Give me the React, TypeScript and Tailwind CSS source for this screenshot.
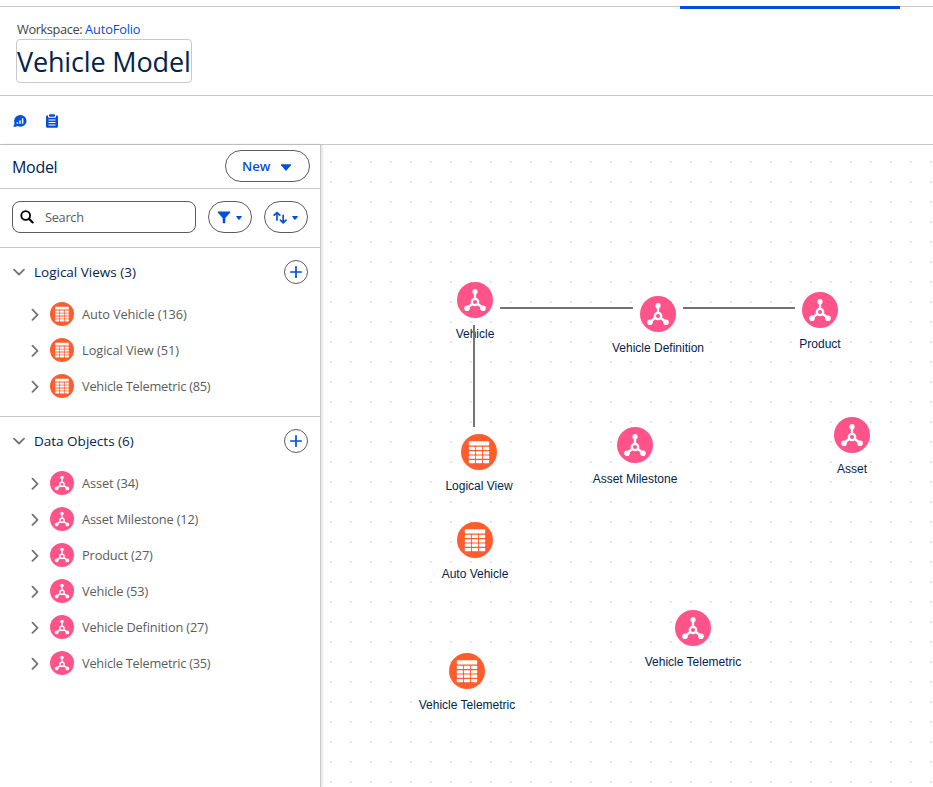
import React from "react";

type Kind = "view" | "object";

function EntityIcon({ kind, className }: { kind: Kind; className: string }) {
  if (kind === "view") {
    return (
      <svg viewBox="0 0 36 36" className={className}>
        <circle cx="18" cy="18" r="18" fill="#ff5d2d" />
        <g fill="#fff">
          <rect x="7.8" y="7.2" width="20.4" height="4.2" rx="0.9" />
          {[12.8, 17.2, 21.6, 26].map((y) =>
            [7.8, 14.9, 22].map((x) => <rect key={`${x}-${y}`} x={x} y={y} width="6.2" height="3.2" rx="0.6" />)
          )}
        </g>
      </svg>
    );
  }
  return (
    <svg viewBox="0 0 36 36" className={className}>
      <circle cx="18" cy="18" r="18" fill="#ff538a" />
      <g stroke="#fff" strokeWidth="2.3" fill="none">
        <circle cx="18" cy="20" r="3.2" />
        <path d="M18 17V9.6M15.2 22L10 26M20.8 22L26 26" />
      </g>
      <g fill="#fff">
        <circle cx="18" cy="9.7" r="2.6" />
        <circle cx="10" cy="26.2" r="2.8" />
        <circle cx="26" cy="26.2" r="2.8" />
      </g>
    </svg>
  );
}

interface Item {
  kind: Kind;
  label: string;
  tracking: string;
}

const views: Item[] = [
  { kind: "view", label: "Auto Vehicle (136)", tracking: "tracking-[-0.12px]" },
  { kind: "view", label: "Logical View (51)", tracking: "tracking-[-0.05px]" },
  { kind: "view", label: "Vehicle Telemetric (85)", tracking: "tracking-[-0.25px]" },
];

const objects: Item[] = [
  { kind: "object", label: "Asset (34)", tracking: "tracking-[-0.1px]" },
  { kind: "object", label: "Asset Milestone (12)", tracking: "tracking-[-0.16px]" },
  { kind: "object", label: "Product (27)", tracking: "tracking-[-0.15px]" },
  { kind: "object", label: "Vehicle (53)", tracking: "tracking-[-0.16px]" },
  { kind: "object", label: "Vehicle Definition (27)", tracking: "tracking-[-0.17px]" },
  { kind: "object", label: "Vehicle Telemetric (35)", tracking: "tracking-[-0.25px]" },
];

function Section({ title, items }: { title: string; items: Item[] }) {
  return (
    <section className="pb-3">
      <div className="flex h-12 items-center pr-3 pl-3">
        <svg viewBox="0 0 14 14" className="h-3.5 w-3.5 shrink-0" fill="none" stroke="#747474" strokeWidth="1.8" strokeLinecap="round" strokeLinejoin="round">
          <path d="M2 4.7L7 9.5L12 4.7" />
        </svg>
        <h3 className="ml-2 flex-1 text-[13.5px] leading-5 text-[#03234d]">{title}</h3>
        <button className="flex h-6 w-6 items-center justify-center rounded-full border border-[#5c5c5c]">
          <svg viewBox="0 0 14 14" className="h-3.5 w-3.5 shrink-0" stroke="#0250d9" strokeWidth="1.7" strokeLinecap="round">
            <path d="M7 1.8V12.2M1.8 7H12.2" />
          </svg>
        </button>
      </div>
      {items.map((item) => (
        <div key={item.label} className="flex h-9 items-center pl-7">
          <svg viewBox="0 0 14 14" className="h-3.5 w-3.5 shrink-0" fill="none" stroke="#747474" strokeWidth="1.8" strokeLinecap="round" strokeLinejoin="round">
            <path d="M4.5 2.7L9.5 7.8L4.5 12.9" />
          </svg>
          <EntityIcon kind={item.kind} className="ml-2 h-6 w-6 shrink-0" />
          <span className={`ml-2 text-[12.8px] leading-5 text-[#5c5c5c] ${item.tracking}`}>{item.label}</span>
        </div>
      ))}
    </section>
  );
}

function Node({ kind, label, place }: { kind: Kind; label: string; place: string }) {
  return (
    <div className={`absolute flex w-36 -translate-x-1/2 flex-col items-center ${place}`}>
      <EntityIcon kind={kind} className="h-9 w-9" />
      <span className="mt-2 font-['Liberation_Sans',Arial,sans-serif] text-xs leading-4 whitespace-nowrap text-[#03234d]">{label}</span>
    </div>
  );
}

function Caret() {
  return (
    <svg viewBox="0 0 6 4" className="mt-px h-1 w-1.5" fill="#0250d9">
      <path d="M.5 0H5.5Q6 .1 5.7.7L3.4 3.7Q3 4 2.6 3.7L.3.7Q0 .1.5 0Z" />
    </svg>
  );
}

export default function App() {
  return (
    <div className="flex h-[787px] w-[933px] flex-col overflow-hidden bg-white font-['Open_Sans','Noto_Sans',sans-serif]">
      <div className="relative h-[7px] shrink-0 border-b border-[#c9c9c9]">
        <div className="absolute top-1.5 left-[680px] h-[3px] w-[220px] bg-[#0250d9]" />
      </div>
      <header className="flex h-[89px] shrink-0 flex-col items-start border-b border-[#c9c9c9] pt-3 pl-4">
        <div className="pl-px text-[12.8px] leading-5 tracking-[-0.4px] text-[#444]">
          Workspace: <a className="tracking-[-0.15px] text-[#0250d9]">AutoFolio</a>
        </div>
        <h1 className="flex h-11 w-44 items-center rounded border border-[#c9c9c9] pt-0.5 text-[27px] leading-[42px] tracking-[-0.15px] whitespace-nowrap text-[#03234d]">
          Vehicle Model
        </h1>
      </header>
      <div className="flex h-[49px] shrink-0 items-center gap-[18px] border-b border-[#c9c9c9] pt-0.5 pl-[13px]">
        <svg viewBox="0 0 14 14" className="h-3.5 w-3.5">
          <ellipse cx="7.3" cy="6.9" rx="6.2" ry="5.9" fill="#0250d9" />
          <path fill="#0250d9" d="M1.5 8.5Q1.6 10.8.3 12Q0 12.7.8 12.8Q3 12.9 4.5 11.9Z" />
          <path d="M4.4 8.3V9.8M7 6.6V9.8M9.6 4.2V9.8" stroke="#fff" strokeWidth="1.5" />
        </svg>
        <svg viewBox="0 0 14 14" className="h-3.5 w-3.5">
          <path fill="#0250d9" d="M2.2 1.5H3v1.3q0 .9.9.9h6.2q.9 0 .9-.9V1.5h.8q1.2 0 1.2 1.2v9.8q0 1.2-1.2 1.2H2.2Q1 13.7 1 12.5V2.7Q1 1.5 2.2 1.5Z" />
          <rect x="4" y=".3" width="6" height="2.5" rx=".8" fill="#0250d9" />
          <path d="M3.5 6H10.5M3.5 8.5H10.5M3.5 11H10.5" stroke="#fff" strokeWidth="1.1" />
        </svg>
      </div>
      <div className="flex min-h-0 flex-1">
        <aside className="z-10 flex w-[321px] shrink-0 flex-col border-r border-[#c9c9c9] bg-white shadow-[1px_0_3px_rgba(0,0,0,0.16)]">
          <div className="flex h-11 shrink-0 items-center justify-between border-b border-[#c9c9c9] pr-2.5 pb-px pl-3">
            <h2 className="pt-0.5 text-base tracking-[-0.3px] text-[#03234d]">Model</h2>
            <button className="flex h-8 w-[85px] items-center rounded-full border border-[#5c5c5c] pl-4 text-[13px] font-semibold text-[#0250d9]">
              <span className="pt-px">New</span>
              <svg viewBox="0 0 12 7" className="mt-[3px] ml-2.5 h-[7px] w-3" fill="#0250d9">
                <path d="M1.5.3H10.5Q11.5.3 10.9 1.2L6.7 6.3Q6 7 5.3 6.3L1.1 1.2Q.5.3 1.5.3Z" />
              </svg>
            </button>
          </div>
          <div className="flex h-[59px] shrink-0 items-center gap-3 border-b border-[#c9c9c9] pr-3 pb-0.5 pl-3">
            <div className="flex h-8 w-46 items-center rounded-lg border border-[#5c5c5c] pl-[7px]">
              <svg viewBox="0 0 14 14" className="h-3.5 w-3.5" fill="none" stroke="#000" strokeWidth="1.8">
                <circle cx="5.7" cy="5.5" r="4.4" />
                <path d="M8.9 8.7L12.7 12.5" strokeWidth="2.1" strokeLinecap="round" />
              </svg>
              <span className="mt-0.5 ml-[11px] text-[12.8px] tracking-[-0.3px] text-[#5c5c5c]">Search</span>
            </div>
            <button className="flex h-8 w-11 items-center justify-center gap-[5px] rounded-full border border-[#5c5c5c] pr-0.5">
              <svg viewBox="0 0 14 14" className="h-3.5 w-3.5" fill="#0250d9">
                <path d="M1 1.5H13Q13.8 1.8 13.2 2.6L8.3 8V12.8Q8.3 13.3 7.8 13.3H6.2Q5.7 13.3 5.7 12.8V8L.8 2.6Q.2 1.8 1 1.5Z" />
              </svg>
              <Caret />
            </button>
            <button className="flex h-8 w-11 items-center justify-center gap-[5px] rounded-full border border-[#5c5c5c] pr-0.5">
              <svg viewBox="0 0 14 14" className="h-3.5 w-3.5" fill="none" stroke="#0250d9" strokeWidth="1.7" strokeLinecap="round" strokeLinejoin="round">
                <path d="M4 10V2.8M1.2 5.2L4 2.5L6.8 5.2M10.2 5.3V12.5M7.4 10.1L10.2 12.8L13 10.1" />
              </svg>
              <Caret />
            </button>
          </div>
          <div className="border-b border-[#c9c9c9]">
            <Section title="Logical Views (3)" items={views} />
          </div>
          <Section title="Data Objects (6)" items={objects} />
        </aside>
        <main className="relative min-w-0 flex-1 overflow-hidden bg-white">
          <svg className="absolute inset-0 h-full w-full" shapeRendering="crispEdges">
            <defs>
              <pattern id="dots" x="9" y="16" width="20" height="20" patternUnits="userSpaceOnUse">
                <rect width="1" height="2" fill="#dedede" />
                <rect x="1" width="1" height="2" fill="#ededed" />
              </pattern>
            </defs>
            <rect width="100%" height="100%" fill="url(#dots)" />
          </svg>
          <Node kind="object" label="Vehicle" place="left-[154px] top-[137px]" />
          <Node kind="object" label="Vehicle Definition" place="left-[337px] top-[151px]" />
          <Node kind="object" label="Product" place="left-[499px] top-[147px]" />
          <Node kind="object" label="Asset Milestone" place="left-[314px] top-[282px]" />
          <Node kind="object" label="Asset" place="left-[531px] top-[272px]" />
          <Node kind="view" label="Logical View" place="left-[158px] top-[289px]" />
          <Node kind="view" label="Auto Vehicle" place="left-[154px] top-[377px]" />
          <Node kind="object" label="Vehicle Telemetric" place="left-[372px] top-[465px]" />
          <Node kind="view" label="Vehicle Telemetric" place="left-[146px] top-[508px]" />
          <svg className="absolute inset-0 h-full w-full" stroke="#747474" strokeWidth="2" shapeRendering="crispEdges">
            <path d="M179 163H312M362 163H474M153 180V282" />
          </svg>
        </main>
      </div>
    </div>
  );
}
